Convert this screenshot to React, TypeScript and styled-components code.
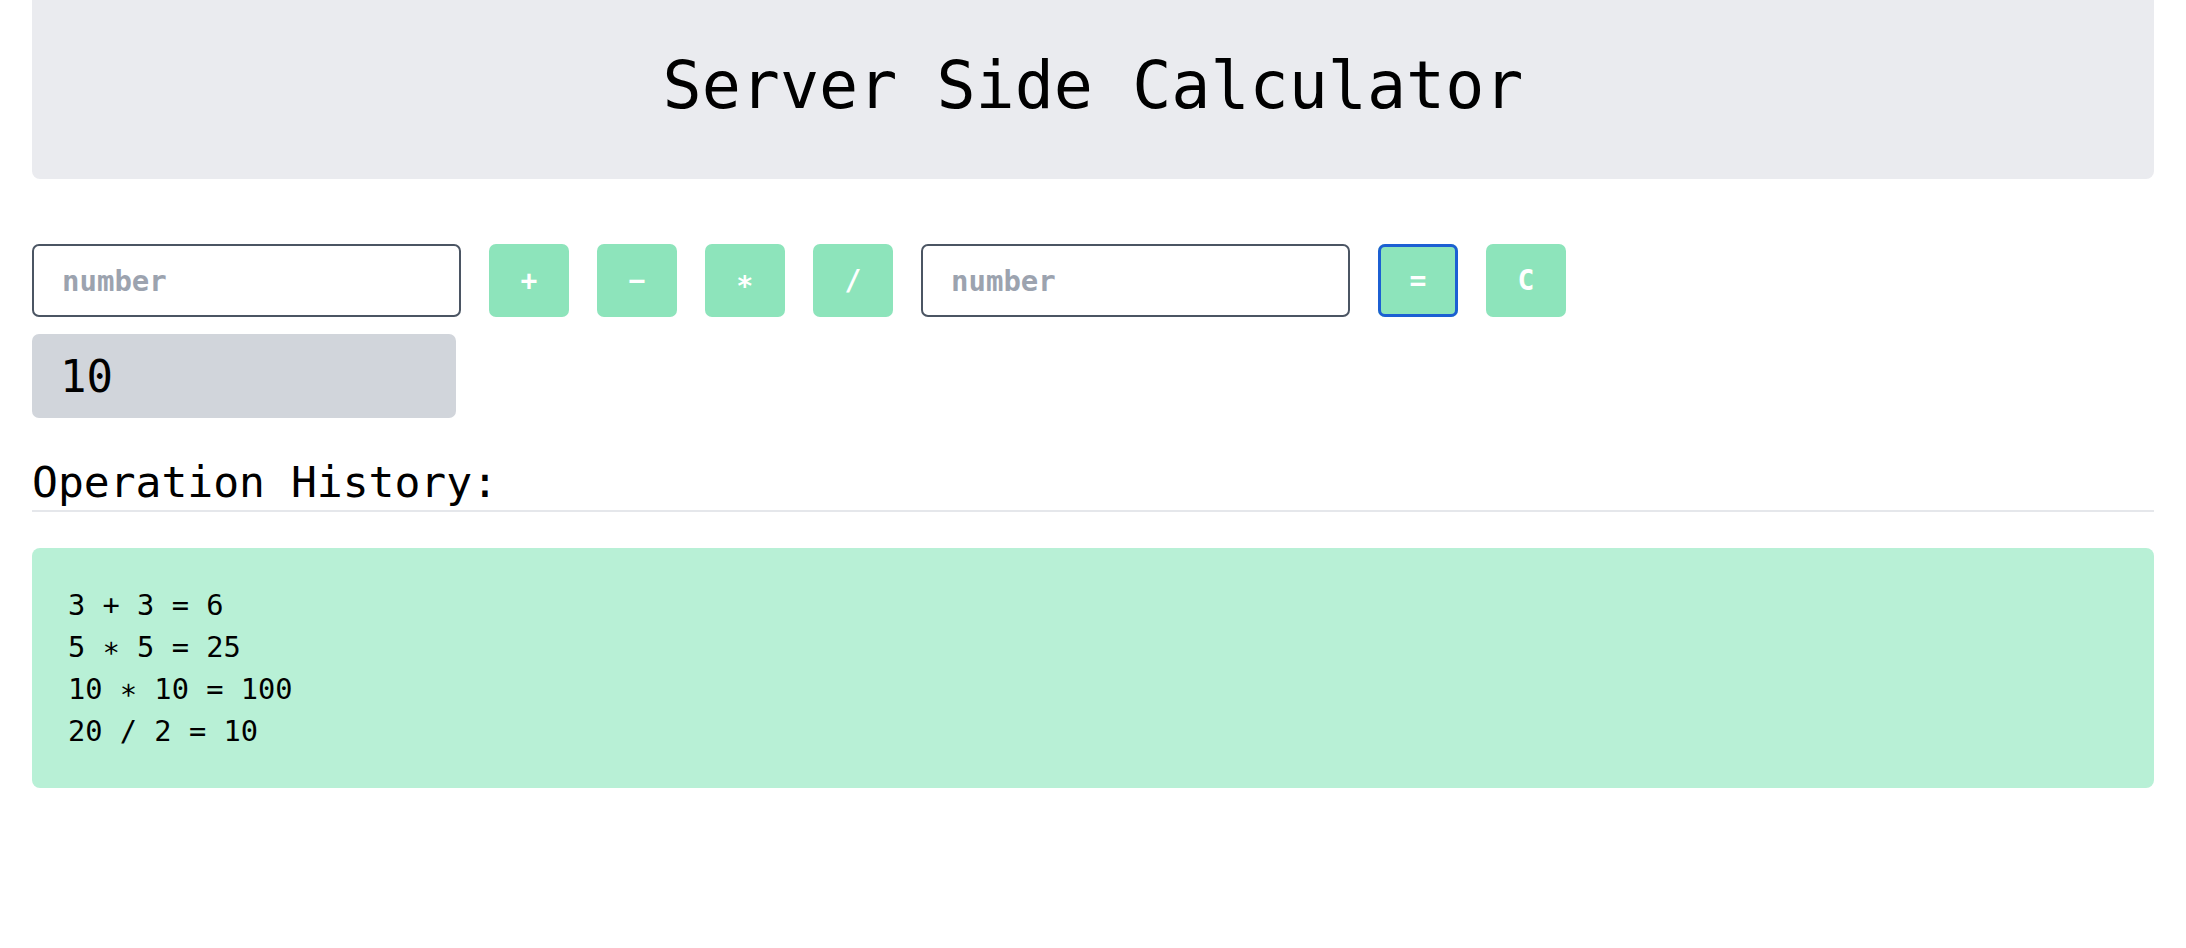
import styled, { createGlobalStyle } from 'styled-components';

const GlobalStyle = createGlobalStyle`
  body {
    margin: 0;
    background: #ffffff;
    font-family: 'DejaVu Sans Mono', 'Liberation Mono', monospace;
    color: #000000;
  }
`;

const Page = styled.div`
  padding: 0 32px;
`;

const Header = styled.header`
  height: 179px;
  box-sizing: border-box;
  padding-bottom: 8px;
  display: flex;
  align-items: center;
  justify-content: center;
  background-color: #eaebef;
  border-radius: 0 0 8px 8px;
`;

const Title = styled.h1`
  margin: 0;
  font-size: 65px;
  font-weight: 400;
  line-height: 1;
`;

const Controls = styled.div`
  margin-top: 65px;
  display: flex;
  align-items: center;
  gap: 28px;
`;

const NumberInput = styled.input`
  width: 429px;
  height: 73px;
  box-sizing: border-box;
  padding: 0 28px;
  border: 2px solid #4b5563;
  border-radius: 7px;
  background: #ffffff;
  font-family: inherit;
  font-size: 29px;
  font-weight: 700;
  color: #111827;
  outline: none;
  &::placeholder {
    color: #9ca3af;
  }
`;

const OpButton = styled.button<{ focused?: boolean }>`
  width: 80px;
  height: 73px;
  flex-shrink: 0;
  border: none;
  border-radius: 7px;
  background-color: #8de4bb;
  color: #ffffff;
  font-family: inherit;
  font-size: 28px;
  font-weight: 700;
  cursor: pointer;
  box-shadow: ${(props) => (props.focused ? 'inset 0 0 0 3px #1c5fd3' : 'none')};
`;

const Result = styled.div`
  margin-top: 17px;
  width: 424px;
  height: 84px;
  box-sizing: border-box;
  padding: 0 28px;
  display: flex;
  align-items: center;
  background-color: #d1d5db;
  border-radius: 7px;
  font-size: 44px;
`;

const HistoryTitle = styled.h2`
  margin: 36px 0 0;
  font-size: 43px;
  font-weight: 400;
  line-height: 56px;
  border-bottom: 2px solid #e5e7eb;
`;

const HistoryBox = styled.div`
  margin-top: 36px;
  padding: 36px;
  background-color: #b8f0d6;
  border-radius: 8px;
  font-size: 28.7px;
  line-height: 42px;
`;

const HistoryLine = styled.div`
  white-space: pre;
`;

const history = ['3 + 3 = 6', '5 ∗ 5 = 25', '10 ∗ 10 = 100', '20 / 2 = 10'];

const App = () => {
  return (
    <Page>
      <GlobalStyle />
      <Header>
        <Title>Server Side Calculator</Title>
      </Header>
      <Controls>
        <NumberInput type='number' placeholder='number' />
        <OpButton>+</OpButton>
        <OpButton>−</OpButton>
        <OpButton>∗</OpButton>
        <OpButton>/</OpButton>
        <NumberInput type='number' placeholder='number' />
        <OpButton focused>=</OpButton>
        <OpButton>C</OpButton>
      </Controls>
      <Result>10</Result>
      <HistoryTitle>Operation History:</HistoryTitle>
      <HistoryBox>
        {history.map((line, index) => (
          <HistoryLine key={index}>{line}</HistoryLine>
        ))}
      </HistoryBox>
    </Page>
  );
};

export default App;
